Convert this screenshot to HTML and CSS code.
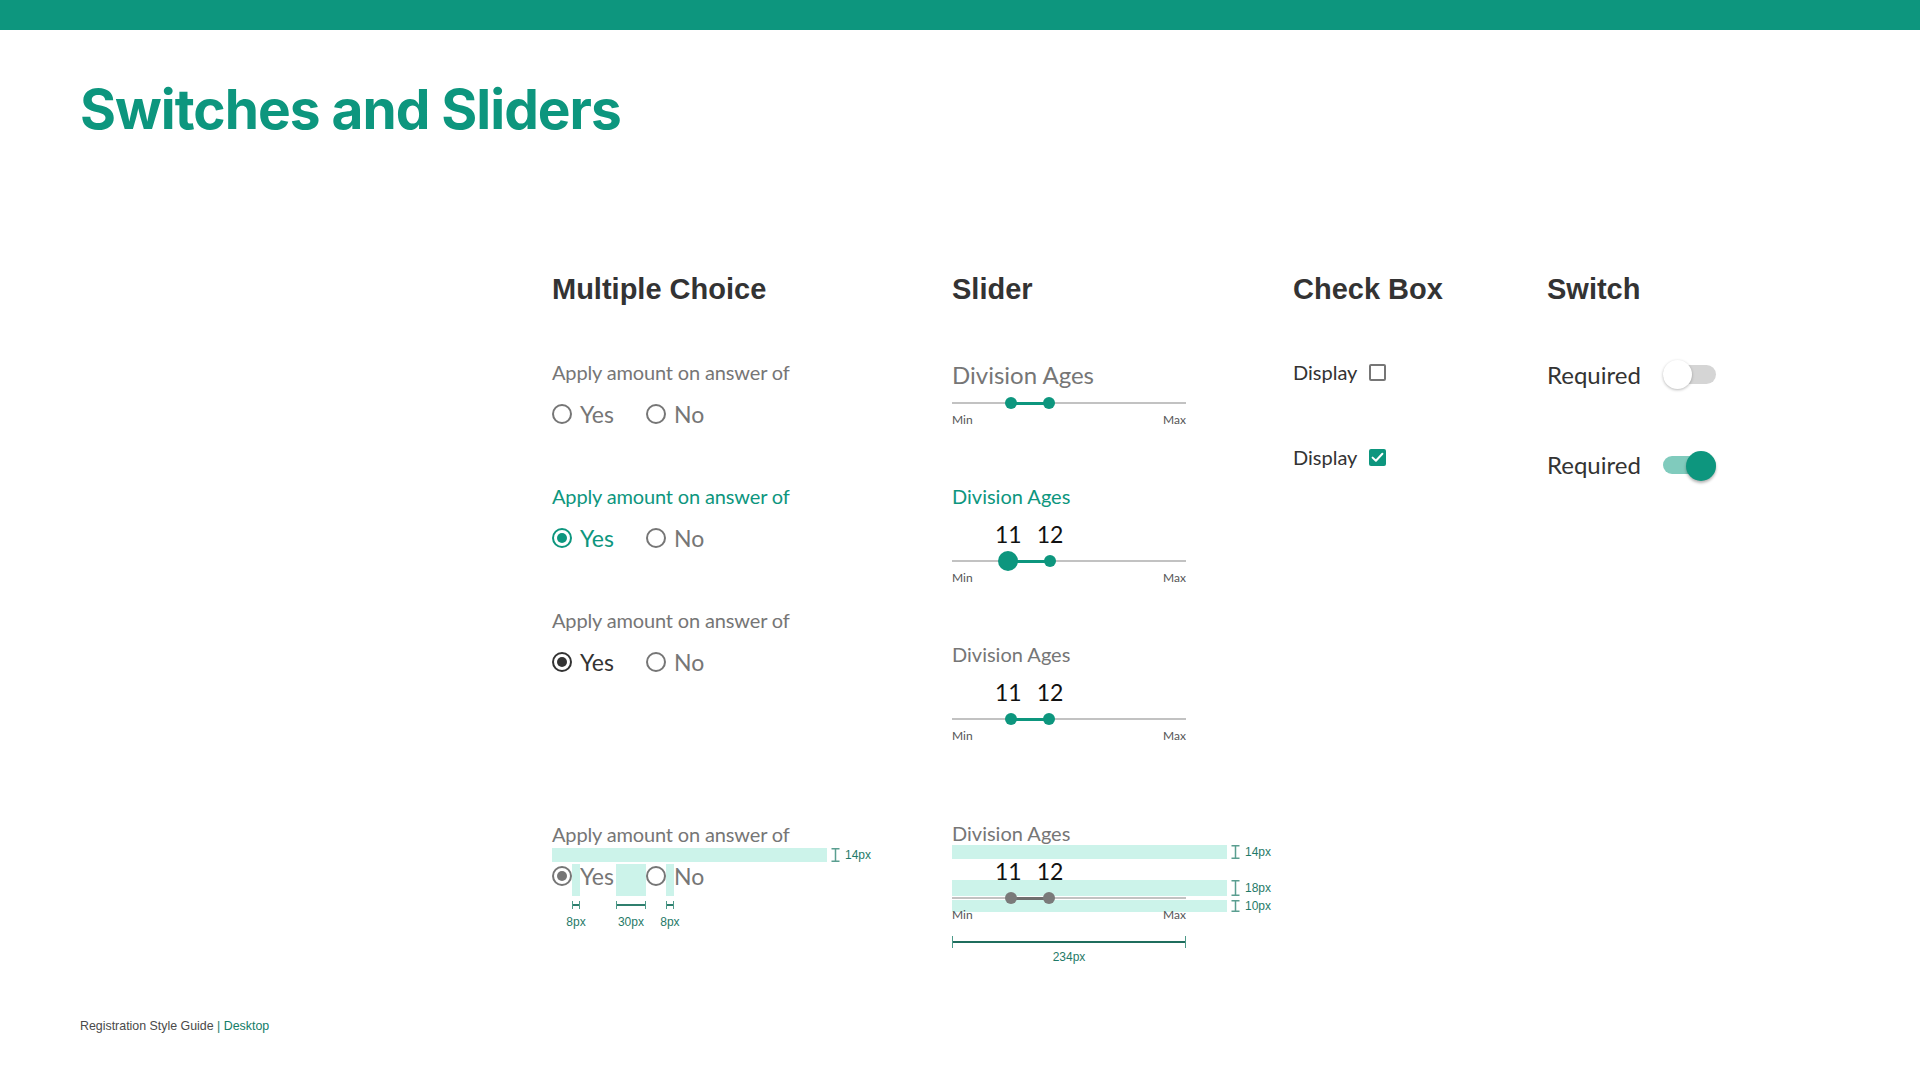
FILE: index.html
```html
<!DOCTYPE html>
<html lang="en">
<head>
<meta charset="utf-8">
<title>Switches and Sliders</title>
<link rel="stylesheet" href="styles.css">
</head>
<body>
<div class="topbar"></div>
<main class="page">
  <h1 class="title">Switches and Sliders</h1>
  <section class="board">
    <div class="col col-mc">
      <h2 class="col-title">Multiple Choice</h2>

      <div class="mc-group g1">
        <div class="mc-label">Apply amount on answer of</div>
        <div class="radio-row">
          <span class="radio"></span><span class="sp8"></span><span class="opt">Yes</span><span class="sp30"></span><span class="radio"></span><span class="sp8"></span><span class="opt">No</span>
        </div>
      </div>

      <div class="mc-group g2 is-active">
        <div class="mc-label">Apply amount on answer of</div>
        <div class="radio-row">
          <span class="radio checked"></span><span class="sp8"></span><span class="opt">Yes</span><span class="sp30"></span><span class="radio"></span><span class="sp8"></span><span class="opt opt-off">No</span>
        </div>
      </div>

      <div class="mc-group g3 is-selected">
        <div class="mc-label">Apply amount on answer of</div>
        <div class="radio-row">
          <span class="radio checked"></span><span class="sp8"></span><span class="opt">Yes</span><span class="sp30"></span><span class="radio"></span><span class="sp8"></span><span class="opt opt-off">No</span>
        </div>
      </div>

      <div class="mc-group g4 is-spec">
        <div class="mc-label">Apply amount on answer of</div>
        <div class="spec-bar">
          <span class="marker"><svg width="9" height="14" viewBox="0 0 9 14"><path d="M0.5 0.75H8.5M4.5 0.75V13.25M0.5 13.25H8.5" stroke="#5a9e90" stroke-width="1.5" fill="none"/></svg><span class="marker-text">14px</span></span>
        </div>
        <div class="radio-row">
          <span class="radio checked"></span><span class="sp8 hl"><span class="dim"><span class="dim-line"></span><span class="dim-text">8px</span></span></span><span class="opt">Yes</span><span class="sp30 hl"><span class="dim"><span class="dim-line"></span><span class="dim-text">30px</span></span></span><span class="radio"></span><span class="sp8 hl"><span class="dim"><span class="dim-line"></span><span class="dim-text">8px</span></span></span><span class="opt">No</span>
        </div>
      </div>
    </div>

    <div class="col col-slider">
      <h2 class="col-title">Slider</h2>

      <div class="slider s1">
        <div class="sl-label big">Division Ages</div>
        <div class="track-area">
          <span class="track"></span>
          <span class="fill" style="left:58.7px;width:38.3px"></span>
          <span class="thumb" style="left:58.7px"></span>
          <span class="thumb" style="left:97px"></span>
        </div>
        <div class="minmax"><span>Min</span><span>Max</span></div>
      </div>

      <div class="slider s2 is-active">
        <div class="sl-label">Division Ages</div>
        <div class="values"><span>11</span><span>12</span></div>
        <div class="track-area">
          <span class="track"></span>
          <span class="fill" style="left:55.7px;width:42.3px"></span>
          <span class="thumb large" style="left:55.7px"></span>
          <span class="thumb" style="left:98px"></span>
        </div>
        <div class="minmax"><span>Min</span><span>Max</span></div>
      </div>

      <div class="slider s3">
        <div class="sl-label">Division Ages</div>
        <div class="values"><span>11</span><span>12</span></div>
        <div class="track-area">
          <span class="track"></span>
          <span class="fill" style="left:58.7px;width:38.3px"></span>
          <span class="thumb" style="left:58.7px"></span>
          <span class="thumb" style="left:97px"></span>
        </div>
        <div class="minmax"><span>Min</span><span>Max</span></div>
      </div>

      <div class="slider s4 is-spec">
        <span class="spec-band b1"><span class="marker"><svg width="9" height="14" viewBox="0 0 9 14"><path d="M0.5 0.75H8.5M4.5 0.75V13.25M0.5 13.25H8.5" stroke="#5a9e90" stroke-width="1.5" fill="none"/></svg><span class="marker-text">14px</span></span></span>
        <span class="spec-band b2"><span class="marker"><svg width="9" height="16" viewBox="0 0 9 16"><path d="M0.5 0.75H8.5M4.5 0.75V15.25M0.5 15.25H8.5" stroke="#5a9e90" stroke-width="1.5" fill="none"/></svg><span class="marker-text">18px</span></span></span>
        <span class="spec-band b3"><span class="marker"><svg width="9" height="12" viewBox="0 0 9 12"><path d="M0.5 0.75H8.5M4.5 0.75V11.25M0.5 11.25H8.5" stroke="#5a9e90" stroke-width="1.5" fill="none"/></svg><span class="marker-text">10px</span></span></span>
        <div class="sl-label">Division Ages</div>
        <div class="values"><span>11</span><span>12</span></div>
        <div class="track-area">
          <span class="track"></span>
          <span class="fill" style="left:58.7px;width:38.3px"></span>
          <span class="thumb" style="left:58.7px"></span>
          <span class="thumb" style="left:97px"></span>
        </div>
        <div class="minmax"><span>Min</span><span>Max</span></div>
        <div class="width-dim"><span class="wd-line"></span></div>
        <div class="width-text">234px</div>
      </div>
    </div>

    <div class="col col-check">
      <h2 class="col-title">Check Box</h2>
      <div class="check-row c1"><span class="check-label">Display</span><span class="checkbox"></span></div>
      <div class="check-row c2"><span class="check-label">Display</span><span class="checkbox checked"><svg width="13" height="11" viewBox="0 0 13 11"><path d="M1.6 5.6L4.9 8.8L11.4 1.8" stroke="#fff" stroke-width="2" fill="none" stroke-linecap="round" stroke-linejoin="round"/></svg></span></div>
    </div>

    <div class="col col-switch">
      <h2 class="col-title">Switch</h2>
      <div class="switch-row w1"><span class="switch-label">Required</span><span class="toggle"><span class="toggle-track"></span><span class="toggle-thumb"></span></span></div>
      <div class="switch-row w2"><span class="switch-label">Required</span><span class="toggle on"><span class="toggle-track"></span><span class="toggle-thumb"></span></span></div>
    </div>
  </section>

  <footer class="footer">Registration Style Guide <span class="footer-accent">| Desktop</span></footer>
</main>
</body>
</html>
```

FILE: styles.css
```css
* { box-sizing: border-box; }

html, body {
  margin: 0;
  padding: 0;
  background: #ffffff;
}

body {
  font-family: "Lato", "Liberation Sans", sans-serif;
  color: #333333;
  width: 1920px;
  height: 1080px;
  display: flex;
  flex-direction: column;
  overflow: hidden;
}

.topbar {
  height: 30px;
  background: #0d967e;
  flex: none;
}

.page {
  flex: 1;
  display: flex;
  flex-direction: column;
  padding: 0 80px;
}

.title {
  margin: 46px 0 0 0;
  font-family: "Inter", "Liberation Sans", sans-serif;
  font-weight: 700;
  font-size: 55px;
  line-height: 66px;
  height: 66px;
  color: #0d967e;
  letter-spacing: -1px;
}

/* ---------- board ---------- */
.board {
  display: grid;
  grid-template-columns: 400px 341px 254px 300px;
  padding-left: 472px;
  margin-top: 130px;
}

.col {
  display: flex;
  flex-direction: column;
  align-items: flex-start;
}

.col-title {
  margin: 0 0 54px 0;
  font-family: "Liberation Sans", "Arial", sans-serif;
  font-weight: 700;
  font-size: 29px;
  line-height: 34px;
  height: 34px;
  color: #333333;
}

/* ---------- multiple choice ---------- */
.mc-group { display: flex; flex-direction: column; position: relative; }
.mc-group.g2, .mc-group.g3 { margin-top: 57px; }
.mc-group.g4 { margin-top: 147px; }

.mc-label {
  font-size: 20px;
  line-height: 24px;
  color: #767676;
  letter-spacing: -0.15px;
}

.radio-row {
  display: flex;
  align-items: center;
  height: 26px;
  margin-top: 17px;
}

.is-spec .radio-row { margin-top: 1px; }

.radio {
  width: 20px;
  height: 20px;
  border-radius: 50%;
  border: 2px solid #767676;
  flex: none;
  position: relative;
}

.radio.checked::after {
  content: "";
  position: absolute;
  left: 3px;
  top: 3px;
  width: 10px;
  height: 10px;
  border-radius: 50%;
  background: #767676;
}

.sp8 { width: 8px; flex: none; height: 26px; position: relative; }
.sp30 { width: 30px; flex: none; height: 26px; position: relative; }

.opt {
  font-size: 23px;
  line-height: 26px;
  color: #767676;
  padding-right: 2px;
}

.is-active .mc-label { color: #0d967e; }
.is-active .radio.checked { border-color: #0d967e; }
.is-active .radio.checked::after { background: #0d967e; }
.is-active .opt { color: #0d967e; }
.is-active .opt-off { color: #767676; }

.is-selected .radio.checked { border-color: #333333; }
.is-selected .radio.checked::after { background: #333333; }
.is-selected .opt { color: #333333; }
.is-selected .opt-off { color: #767676; }

.spec-bar {
  width: 275px;
  height: 14px;
  margin-top: 2px;
  background: #ccf3ea;
  position: relative;
}

.hl {
  align-self: flex-start;
  height: 32px;
  margin-top: 1px;
  background: #ccf3ea;
}

.marker {
  position: absolute;
  left: 279px;
  top: 0;
  display: flex;
  align-items: center;
  gap: 5px;
  height: 100%;
}
.marker svg { display: block; }

.marker-text, .dim-text, .width-text {
  font-family: "Liberation Sans", "Arial", sans-serif;
  font-size: 12px;
  line-height: 14px;
  color: #1f7a68;
}

.dim {
  position: absolute;
  left: 0;
  right: 0;
  top: 37px;
  display: flex;
  flex-direction: column;
  align-items: center;
}

.dim-line {
  width: 100%;
  height: 8px;
  border-left: 1.5px solid #4d9a89;
  border-right: 1.5px solid #4d9a89;
  position: relative;
}
.dim-line::after {
  content: "";
  position: absolute;
  left: 0;
  right: 0;
  top: 3px;
  height: 1.5px;
  background: #2f7f6e;
}

.dim-text {
  margin-top: 6px;
  white-space: nowrap;
}

/* ---------- slider ---------- */
.slider { display: flex; flex-direction: column; position: relative; width: 234px; }
.slider.s2, .slider.s3 { margin-top: 57px; }
.slider.s4 { margin-top: 78px; }

.sl-label {
  font-size: 20px;
  line-height: 24px;
  color: #767676;
  position: relative;
  z-index: 1;
  white-space: nowrap;
}
.sl-label.big {
  font-size: 24px;
  line-height: 29px;
}
.is-active .sl-label { color: #0d967e; }

.values {
  display: flex;
  gap: 15px;
  padding-left: 43px;
  margin-top: 12px;
  font-size: 23px;
  line-height: 28px;
  color: #111111;
  position: relative;
  z-index: 1;
}

.track-area {
  position: relative;
  height: 20px;
  width: 234px;
  margin-top: 4px;
  z-index: 1;
}
.values + .track-area { margin-top: 3px; }

.track {
  position: absolute;
  left: 0;
  right: 0;
  top: 9px;
  height: 2px;
  background: #c2c2c2;
}

.fill {
  position: absolute;
  top: 9px;
  height: 2.5px;
  background: #0d967e;
}

.thumb {
  position: absolute;
  top: 50%;
  width: 12px;
  height: 12px;
  border-radius: 50%;
  background: #0d967e;
  transform: translate(-50%, -50%);
}
.thumb.large { width: 20px; height: 20px; }

.is-spec .fill { background: #6f6f6f; }
.is-spec .thumb { background: #7a7a7a; }

.minmax {
  display: flex;
  justify-content: space-between;
  width: 234px;
  font-size: 12px;
  line-height: 14px;
  color: #555555;
  position: relative;
  z-index: 1;
}

.spec-band {
  position: absolute;
  left: 0;
  width: 275px;
  background: #ccf3ea;
  z-index: 0;
}
.spec-band.b1 { top: 23.5px; height: 14px; }
.spec-band.b2 { top: 58.5px; height: 16px; }
.spec-band.b3 { top: 78.5px; height: 12px; }

.width-dim {
  width: 234px;
  height: 12px;
  margin-top: 14px;
  border-left: 1.5px solid #4d9a89;
  border-right: 1.5px solid #4d9a89;
  position: relative;
}
.wd-line {
  position: absolute;
  left: 0;
  right: 0;
  top: 5px;
  height: 1.5px;
  background: #1f6d5d;
}
.width-text {
  width: 234px;
  text-align: center;
  margin-top: 2px;
}

/* ---------- check box ---------- */
.check-row {
  display: flex;
  align-items: center;
  gap: 12px;
  height: 24px;
}
.check-row.c2 { margin-top: 61px; }

.check-label {
  font-size: 20px;
  line-height: 24px;
  color: #333333;
}

.checkbox {
  width: 17px;
  height: 17px;
  border: 2px solid #767676;
  border-radius: 2px;
  display: flex;
  align-items: center;
  justify-content: center;
}
.checkbox.checked {
  border: none;
  background: #0d967e;
}

/* ---------- switch ---------- */
.switch-row {
  display: flex;
  align-items: center;
  gap: 22px;
  height: 29px;
}
.switch-row.w2 { margin-top: 61px; }

.switch-label {
  font-size: 24px;
  line-height: 29px;
  color: #333333;
}

.toggle {
  position: relative;
  width: 53px;
  height: 30px;
  display: flex;
  align-items: center;
}

.toggle-track {
  width: 53px;
  height: 19px;
  border-radius: 10px;
  background: #d5d5d5;
}

.toggle-thumb {
  position: absolute;
  left: 0;
  top: 0.5px;
  width: 29px;
  height: 29px;
  border-radius: 50%;
  background: #ffffff;
  box-shadow: 0 1px 3px rgba(0, 0, 0, 0.28);
}

.toggle.on .toggle-track {
  height: 18px;
  background: #80cbbd;
}
.toggle.on .toggle-thumb {
  left: auto;
  right: 0;
  top: 1.5px;
  width: 30px;
  height: 30px;
  background: #0d967e;
  box-shadow: 0 2px 3px rgba(0, 0, 0, 0.3);
}

/* ---------- footer ---------- */
.footer {
  margin-top: auto;
  margin-bottom: 47px;
  font-family: "Liberation Sans", "Arial", sans-serif;
  font-size: 12.4px;
  line-height: 14px;
  color: #4a4a4a;
}
.footer-accent { color: #137d68; }
```
